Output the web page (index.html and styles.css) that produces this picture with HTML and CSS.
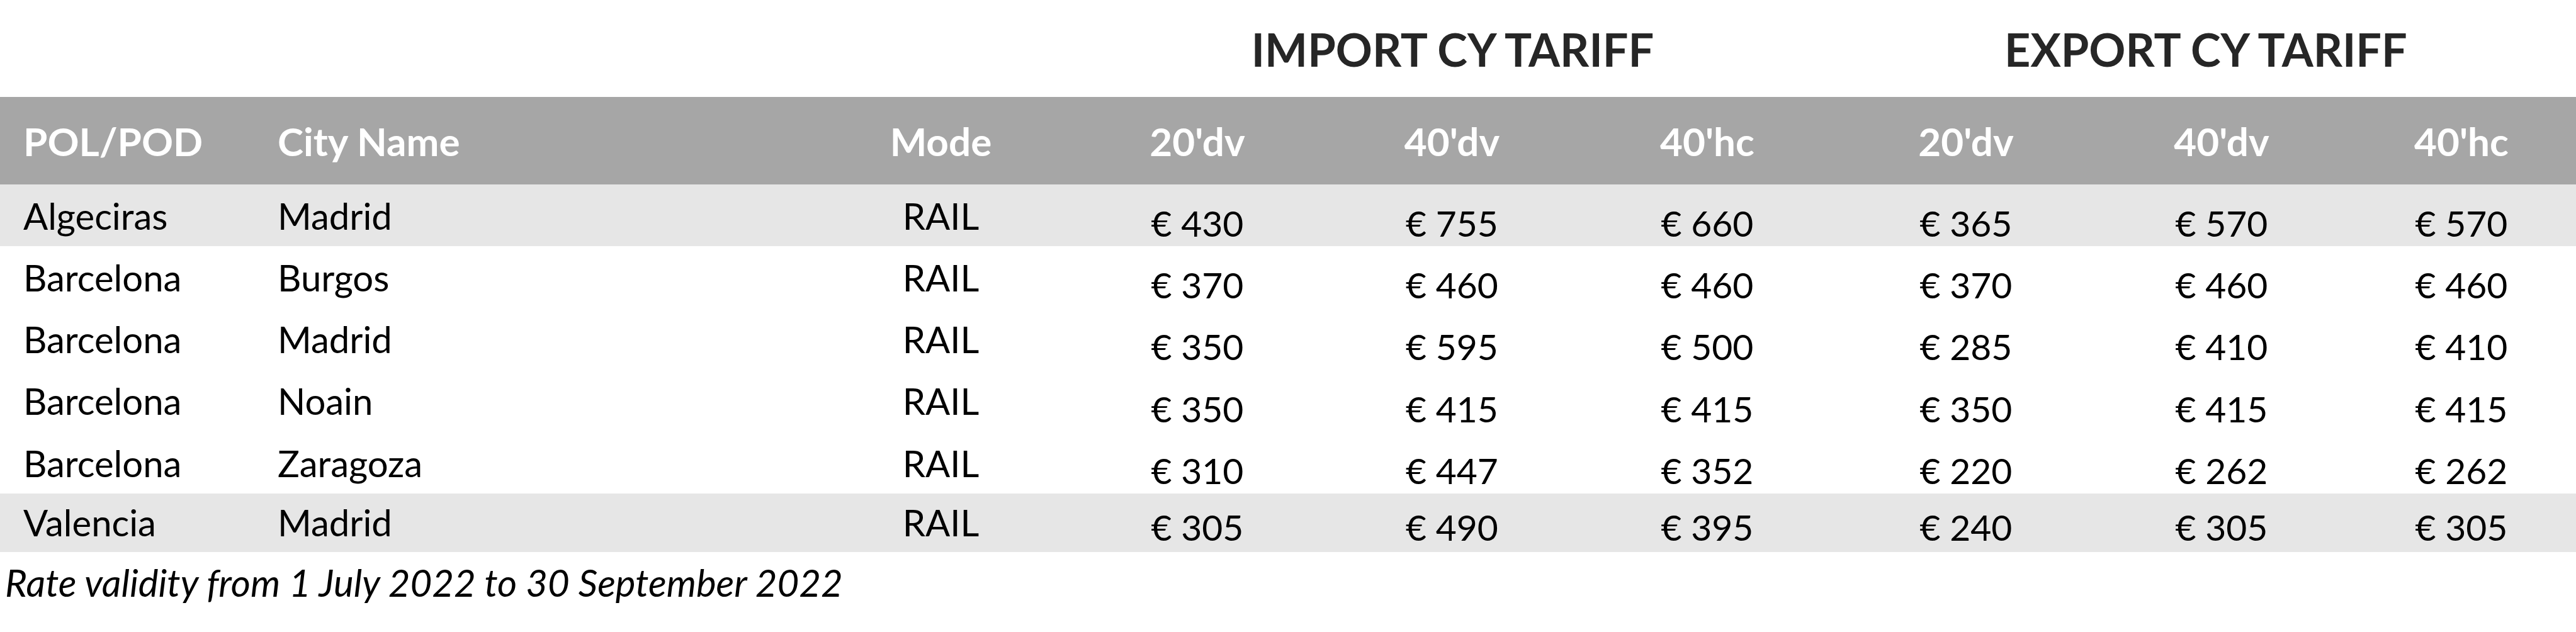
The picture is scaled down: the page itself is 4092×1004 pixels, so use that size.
FILE: index.html
```html
<!DOCTYPE html>
<html lang="en">
<head>
<meta charset="utf-8">
<title>CY Tariff</title>
<link rel="stylesheet" href="styles.css">
</head>
<body>
<div class="sheet">
  <div class="row title-row">
    <div class="title import">IMPORT CY TARIFF</div>
    <div class="title export">EXPORT CY TARIFF</div>
  </div>
  <div class="row head">
    <div class="cell first">POL/POD</div>
    <div class="cell">City Name</div>
    <div class="cell c">Mode</div>
    <div class="cell c">20'dv</div>
    <div class="cell c">40'dv</div>
    <div class="cell c">40'hc</div>
    <div class="cell c">20'dv</div>
    <div class="cell c">40'dv</div>
    <div class="cell c">40'hc</div>
  </div>
  <div class="row data shaded">
    <div class="cell first">Algeciras</div><div class="cell">Madrid</div><div class="cell c">RAIL</div>
    <div class="cell c num">€ 430</div><div class="cell c num">€ 755</div><div class="cell c num">€ 660</div>
    <div class="cell c num">€ 365</div><div class="cell c num">€ 570</div><div class="cell c num">€ 570</div>
  </div>
  <div class="row data">
    <div class="cell first">Barcelona</div><div class="cell">Burgos</div><div class="cell c">RAIL</div>
    <div class="cell c num">€ 370</div><div class="cell c num">€ 460</div><div class="cell c num">€ 460</div>
    <div class="cell c num">€ 370</div><div class="cell c num">€ 460</div><div class="cell c num">€ 460</div>
  </div>
  <div class="row data">
    <div class="cell first">Barcelona</div><div class="cell">Madrid</div><div class="cell c">RAIL</div>
    <div class="cell c num">€ 350</div><div class="cell c num">€ 595</div><div class="cell c num">€ 500</div>
    <div class="cell c num">€ 285</div><div class="cell c num">€ 410</div><div class="cell c num">€ 410</div>
  </div>
  <div class="row data">
    <div class="cell first">Barcelona</div><div class="cell">Noain</div><div class="cell c">RAIL</div>
    <div class="cell c num">€ 350</div><div class="cell c num">€ 415</div><div class="cell c num">€ 415</div>
    <div class="cell c num">€ 350</div><div class="cell c num">€ 415</div><div class="cell c num">€ 415</div>
  </div>
  <div class="row data">
    <div class="cell first">Barcelona</div><div class="cell">Zaragoza</div><div class="cell c">RAIL</div>
    <div class="cell c num">€ 310</div><div class="cell c num">€ 447</div><div class="cell c num">€ 352</div>
    <div class="cell c num">€ 220</div><div class="cell c num">€ 262</div><div class="cell c num">€ 262</div>
  </div>
  <div class="row data shaded last">
    <div class="cell first">Valencia</div><div class="cell">Madrid</div><div class="cell c">RAIL</div>
    <div class="cell c num">€ 305</div><div class="cell c num">€ 490</div><div class="cell c num">€ 395</div>
    <div class="cell c num">€ 240</div><div class="cell c num">€ 305</div><div class="cell c num">€ 305</div>
  </div>
  <p class="note">Rate validity from 1 July 2022 to 30 September 2022</p>
</div>
</body>
</html>
```
FILE: styles.css
```css
html, body {
  margin: 0;
  padding: 0;
  background: #ffffff;
}
body {
  font-family: Lato, "Open Sans", "Liberation Sans", sans-serif;
  color: #000000;
}
.sheet {
  width: 4092px;
}
.row {
  display: grid;
  grid-template-columns: 441px 849px 409px 406px 403px 408px 414px 398px 364px;
  align-items: end;
}
.cell {
  line-height: 1.2;
  white-space: nowrap;
}
.cell.first {
  padding-left: 37px;
}
.cell.c {
  text-align: center;
}
.title-row {
  height: 154px;
}
.title {
  font-weight: 700;
  font-size: 72px;
  line-height: 1.2;
  color: #262626;
  text-align: center;
  padding-bottom: 33px;
  white-space: nowrap;
}
.title.import {
  grid-column: 4 / 7;
}
.title.export {
  grid-column: 7 / 10;
}
.head {
  height: 139px;
  background: #a6a6a6;
  color: #ffffff;
  font-weight: 700;
  font-size: 62px;
}
.head .cell {
  padding-bottom: 32px;
}
.data {
  height: 98.25px;
  font-size: 58px;
}
.data.shaded {
  background: #e6e6e6;
}
.data .cell {
  padding-bottom: 14px;
}
.data .cell.num {
  font-size: 57px;
  padding-bottom: 3px;
}
.data.last {
  height: 93px;
}
.data.last .cell {
  padding-bottom: 13px;
}
.data.last .cell.num {
  padding-bottom: 6px;
}
.note {
  margin: 12px 0 0 8px;
  font-style: italic;
  font-size: 60px;
  line-height: 1.2;
}
```
